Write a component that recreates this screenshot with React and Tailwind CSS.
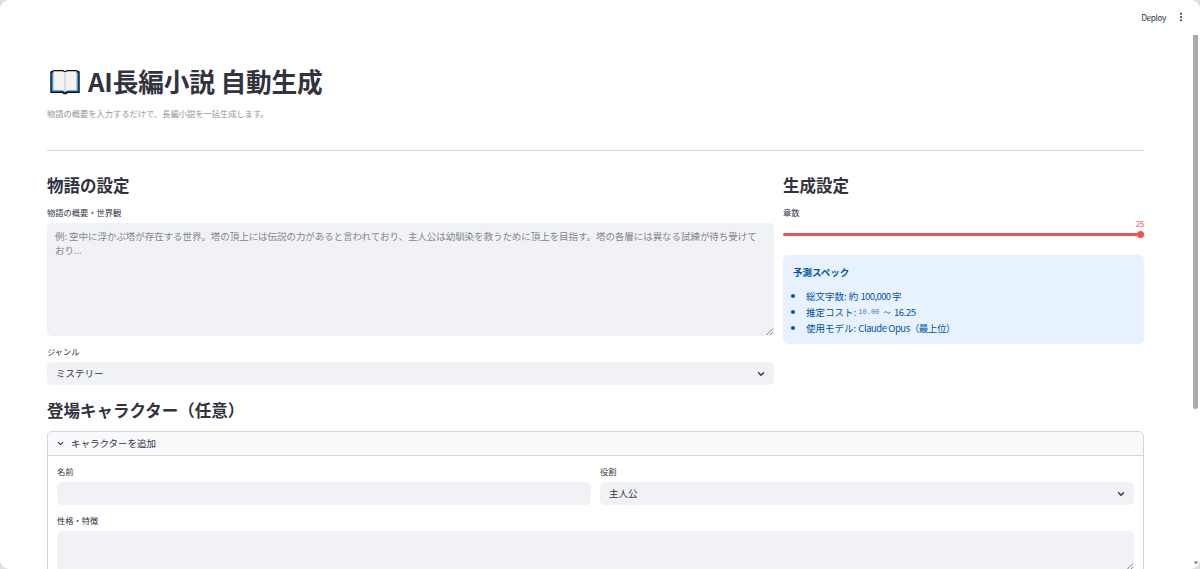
import { ChevronDown } from "lucide-react";

function BookIcon() {
  return (
    <svg viewBox="0 0 30 26" className="w-[30px] h-[26px] mt-[2px]">
      <path d="M0.3 2.4L4 1H13L15 2.2L17 1H26L29.7 2.4V24H17.5L16.5 25.3H13.5L12.5 24H0.3z" fill="#050b12" />
      <path d="M1.6 3.4h26.8v19.2H17L15 23.8l-2-1.2H1.6z" fill="#3f97dd" />
      <path d="M3.4 2.2H12.6L15 3.4L17.4 2.2H26.6V21.2H17.5L15 22.6L12.5 21.2H3.4z" fill="#f3f3f3" />
      <path d="M14 3.4h2v18.4h-2z" fill="#dcdcdc" />
    </svg>
  );
}

function Label({ children }) {
  return <div className="h-[22px] leading-[22px] text-[8.25px] text-[#31333f]">{children}</div>;
}

function Heading({ children }) {
  return (
    <h2 className="h-[30px] leading-[30px] text-[16.5px] font-bold text-[#31333f] whitespace-nowrap">
      {children}
    </h2>
  );
}

function Select({ value }) {
  return (
    <div className="flex items-center justify-between h-[23px] pl-[9px] pr-[8px] rounded-[5px] bg-[#f0f2f6] text-[9.5px] text-[#31333f]">
      <span>{value}</span>
      <ChevronDown size={10} strokeWidth={3} />
    </div>
  );
}

function TextArea({ className, children }) {
  return (
    <div className={`relative rounded-[5px] bg-[#f0f2f6] ${className}`}>
      {children}
      <svg viewBox="0 0 8 8" className="absolute right-0 bottom-0 w-[8px] h-[8px]" stroke="#666" strokeWidth="0.8">
        <path d="M0.5 7L7 0.5M4 7L7 4" />
      </svg>
    </div>
  );
}

function Spec({ children }) {
  return (
    <li className="flex items-center h-[16px] whitespace-pre">
      <span className="w-[4px] h-[4px] mr-[11px] rounded-full bg-[#0054a3]" />
      {children}
    </li>
  );
}

export default function App() {
  return (
    <div className="w-[1200px] h-[569px] overflow-hidden bg-[#dedfe2] font-['Noto_Sans_CJK_JP',sans-serif]">
      <div className="flex flex-col h-full overflow-hidden rounded-[9px] bg-white">
        <header className="flex shrink-0 items-center justify-end h-[35px] pr-[17px] pb-[1px] text-[#31333f]">
          <span className="text-[8.25px] mr-[13px] tracking-[-0.35px]">Deploy</span>
          <svg viewBox="0 0 4 10" className="w-[4px] h-[10px]" fill="currentColor">
            <circle cx="2" cy="1.8" r="1" />
            <circle cx="2" cy="5" r="1" />
            <circle cx="2" cy="8.2" r="1" />
          </svg>
        </header>

        <div className="flex flex-1 min-h-0">
          <main className="w-[1097px] ml-[47px] pt-[25px]">
            <h1 className="flex items-center h-[42px] pl-[3px] gap-[8px] text-[25.7px] font-bold text-[#31333f] whitespace-nowrap">
              <BookIcon />
              <span className="tracking-[-0.15px]">AI長編小説 自動生成</span>
            </h1>
            <p className="h-[22px] leading-[22px] text-[8.25px] text-[#93949b]">
              物語の概要を入力するだけで、長編小説を一括生成します。
            </p>
            <hr className="mt-[26px] border-0 h-px bg-[#d6d6d9]" />

            <div className="flex gap-[9px] pt-[19px]">
              <section className="w-[727px]">
                <Heading>物語の設定</Heading>
                <div className="h-[1px]" />
                <Label>物語の概要・世界観</Label>
                <TextArea className="h-[113px] px-[8px] py-[7px] leading-[13.5px] text-[9.5px] text-[#84858d]">
                  <div className="whitespace-nowrap tracking-[-0.05px]">
                    例: 空中に浮かぶ塔が存在する世界。塔の頂上には伝説の力があると言われており、主人公は幼馴染を救うために頂上を目指す。塔の各層には異なる試練が待ち受けて
                    <br />
                    おり...
                  </div>
                </TextArea>
                <div className="h-[4px]" />
                <Label>ジャンル</Label>
                <Select value="ミステリー" />
              </section>

              <section className="w-[361px]">
                <Heading>生成設定</Heading>
                <div className="h-[1px]" />
                <Label>章数</Label>
                <div className="h-[32px]">
                  <div className="flex justify-end h-[8px] leading-[2px] text-[7.8px] tracking-[-0.2px] text-[#ff4b4b]">25</div>
                  <div className="flex items-center justify-end h-[7px]">
                    <div className="flex-1 h-[3px] rounded-l-full bg-[#ff4b4b]" />
                    <div className="w-[7px] h-[7px] rounded-full bg-[#ff4b4b]" />
                  </div>
                </div>
                <div className="h-[89px] px-[10px] pt-[9px] rounded-[5px] bg-[#e8f2ff] text-[9.5px] text-[#0054a3]">
                  <p className="h-[16px] leading-[16px] font-bold">予測スペック</p>
                  <ul className="mt-[8px] -ml-[2px]">
                    <Spec>
                      総文字数: 約 <span className="tracking-[-0.6px]">100,000 </span>字
                    </Spec>
                    <Spec>
                      推定コスト: <span className="font-['Liberation_Mono',monospace] text-[7px] text-[#3c7fb0]">10.00 </span>
                      <span className="text-[7px]">～</span>
                      <span className="tracking-[-0.4px]">  16.25</span>
                    </Spec>
                    <Spec>
                      使用モデル: <span className="tracking-[-0.45px]">Claude Opus</span>
                      <span className="tracking-[-0.4px]">（最上位）</span>
                    </Spec>
                  </ul>
                </div>
              </section>
            </div>

            <div className="pt-[10px]">
              <Heading>登場キャラクター（任意）</Heading>
            </div>

            <div className="mt-[6px] h-[160px] rounded-t-[5px] border border-[#d6d6d9]">
              <div className="flex items-center h-[24px] pl-[8px] gap-[6px] rounded-t-[4px] border-b border-[#d6d6d9] bg-[#f8f9fb] text-[9.5px] text-[#31333f]">
                <ChevronDown size={9} strokeWidth={2.8} />
                <span>キャラクターを追加</span>
              </div>
              <div className="px-[9px] pt-[4px]">
                <div className="grid grid-cols-2 gap-[9px]">
                  <div>
                    <Label>名前</Label>
                    <div className="h-[23px] rounded-[5px] bg-[#f0f2f6]" />
                  </div>
                  <div>
                    <Label>役割</Label>
                    <Select value="主人公" />
                  </div>
                </div>
                <div className="h-[4px]" />
                <Label>性格・特徴</Label>
                <TextArea className="h-[40px]" />
              </div>
            </div>
          </main>

          <div className="flex flex-col items-center justify-between ml-auto w-[5px] mr-[2px] pb-[4px]">
            <div className="w-[5px] h-[374px] rounded-b-full bg-[#aaaaae]" />
            <svg viewBox="0 0 6 4" className="w-[6px] h-[4px]">
              <path d="M0.5 0.5h5L3 3.5z" fill="#8b8b8f" />
            </svg>
          </div>
        </div>
      </div>
    </div>
  );
}
